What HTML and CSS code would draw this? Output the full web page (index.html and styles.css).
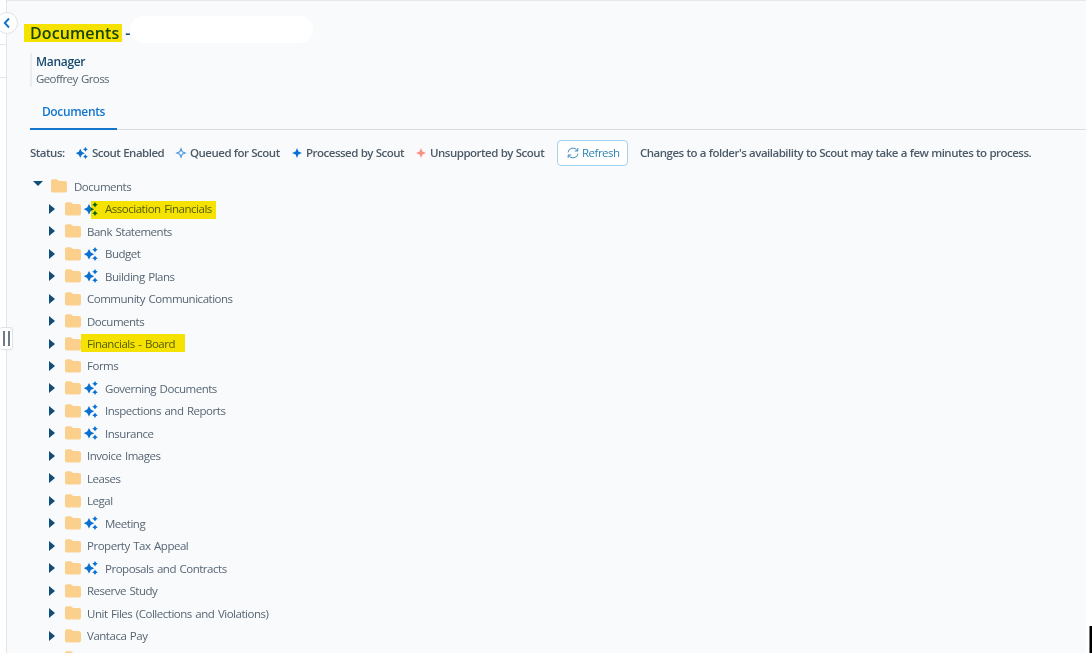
FILE: index.html
```
<!DOCTYPE html>
<html lang="en">
  <head>
    <meta charset="UTF-8" />
    <title>Documents</title>
    <link rel="stylesheet" href="styles.css">
  </head>
  <body>
    <svg class="defs" width="0" height="0">
      <symbol id="folder" viewBox="0 0 16 14">
        <path d="M0 2.2Q0 .3 1.8 .3H5.4Q6.3 .3 7 1L8 2H14Q16 2 16 4V11.6Q16 13.6 14 13.6H2Q0 13.6 0 11.6Z" fill="#fbd08d" />
      </symbol>
      <symbol id="star" viewBox="0 0 10 10">
        <path d="M5 0L6.4 3.6L10 5L6.4 6.4L5 10L3.6 6.4L0 5L3.6 3.6Z" />
      </symbol>
      <symbol id="sparkles" viewBox="0 0 14 14">
        <path d="M5 2L6.8 5.4L10.2 7.2L6.8 9L5 12.4L3.2 9L-.2 7.2L3.2 5.4ZM11 0L12 1.8L13.8 2.8L12 3.8L11 5.6L10 3.8L8.2 2.8L10 1.8ZM11 8.4L12 10.2L13.8 11.2L12 12.2L11 14L10 12.2L8.2 11.2L10 10.2Z" />
      </symbol>
    </svg>
    <div id="app">
      <div id="rail">
        <div class="rail-top"></div>
        <div class="rail-item"></div>
        <button class="rail-toggle">
          <svg width="8" height="12" viewBox="0 0 8 12"><path d="M6 1.5L1.8 6L6 10.5" fill="none" stroke="#1273cc" stroke-width="1.9" /></svg>
        </button>
        <div class="rail-grip"></div>
      </div>
      <main id="content">
        <h1 class="page-title"><span class="marker">Documents</span><span class="dash">-</span><span class="blank"></span></h1>
        <div class="manager">
          <div class="manager-label">Manager</div>
          <div class="manager-name">Geoffrey Gross</div>
        </div>
        <nav class="tabs"><a class="tab">Documents</a></nav>
        <div class="status">
          <span class="status-label">Status:</span>
          <span class="status-item enabled"><svg class="blue" width="12" height="12"><use href="#sparkles" /></svg>Scout Enabled</span>
          <span class="status-item queued"><svg width="10" height="10" viewBox="0 0 10 10"><path d="M5 .8L6.2 3.8L9.2 5L6.2 6.2L5 9.2L3.8 6.2L.8 5L3.8 3.8Z" fill="#fff" stroke="#4c97dc" stroke-width="1.1" /></svg>Queued for Scout</span>
          <span class="status-item processed"><svg class="blue" width="10" height="10"><use href="#star" /></svg>Processed by Scout</span>
          <span class="status-item unsupported"><svg class="red" width="10" height="10"><use href="#star" /></svg>Unsupported by Scout</span>
          <button class="refresh">
            <svg width="12" height="12" viewBox="0 0 12 12" fill="none" stroke="#2b82b5" stroke-width=".9"><path d="M1 5.4A5 5 0 0 1 10.3 3.6M10.8 1V4H7.8M11 6.6A5 5 0 0 1 1.7 8.4M1.2 11V8H4.2" /></svg>
            <span>Refresh</span>
          </button>
          <span class="note">Changes to a folder's availability to Scout may take a few minutes to process.</span>
        </div>
        <div class="tree-root"><i class="arrow-down"></i><svg class="folder" width="16" height="14"><use href="#folder" /></svg><span>Documents</span></div>
        <ul class="tree">
          <li><i class="arrow"></i><svg class="folder" width="16" height="14"><use href="#folder" /></svg><svg class="scout" width="14" height="14"><use href="#sparkles" /></svg><span class="marker marker-assoc">Association Financials</span></li>
          <li><i class="arrow"></i><svg class="folder" width="16" height="14"><use href="#folder" /></svg><span>Bank Statements</span></li>
          <li><i class="arrow"></i><svg class="folder" width="16" height="14"><use href="#folder" /></svg><svg class="scout" width="14" height="14"><use href="#sparkles" /></svg><span>Budget</span></li>
          <li><i class="arrow"></i><svg class="folder" width="16" height="14"><use href="#folder" /></svg><svg class="scout" width="14" height="14"><use href="#sparkles" /></svg><span>Building Plans</span></li>
          <li><i class="arrow"></i><svg class="folder" width="16" height="14"><use href="#folder" /></svg><span>Community Communications</span></li>
          <li><i class="arrow"></i><svg class="folder" width="16" height="14"><use href="#folder" /></svg><span>Documents</span></li>
          <li><i class="arrow"></i><svg class="folder" width="16" height="14"><use href="#folder" /></svg><span class="marker marker-board">Financials - Board</span></li>
          <li><i class="arrow"></i><svg class="folder" width="16" height="14"><use href="#folder" /></svg><span>Forms</span></li>
          <li><i class="arrow"></i><svg class="folder" width="16" height="14"><use href="#folder" /></svg><svg class="scout" width="14" height="14"><use href="#sparkles" /></svg><span>Governing Documents</span></li>
          <li><i class="arrow"></i><svg class="folder" width="16" height="14"><use href="#folder" /></svg><svg class="scout" width="14" height="14"><use href="#sparkles" /></svg><span>Inspections and Reports</span></li>
          <li><i class="arrow"></i><svg class="folder" width="16" height="14"><use href="#folder" /></svg><svg class="scout" width="14" height="14"><use href="#sparkles" /></svg><span>Insurance</span></li>
          <li><i class="arrow"></i><svg class="folder" width="16" height="14"><use href="#folder" /></svg><span>Invoice Images</span></li>
          <li><i class="arrow"></i><svg class="folder" width="16" height="14"><use href="#folder" /></svg><span>Leases</span></li>
          <li><i class="arrow"></i><svg class="folder" width="16" height="14"><use href="#folder" /></svg><span>Legal</span></li>
          <li><i class="arrow"></i><svg class="folder" width="16" height="14"><use href="#folder" /></svg><svg class="scout" width="14" height="14"><use href="#sparkles" /></svg><span>Meeting</span></li>
          <li><i class="arrow"></i><svg class="folder" width="16" height="14"><use href="#folder" /></svg><span>Property Tax Appeal</span></li>
          <li><i class="arrow"></i><svg class="folder" width="16" height="14"><use href="#folder" /></svg><svg class="scout" width="14" height="14"><use href="#sparkles" /></svg><span>Proposals and Contracts</span></li>
          <li><i class="arrow"></i><svg class="folder" width="16" height="14"><use href="#folder" /></svg><span>Reserve Study</span></li>
          <li><i class="arrow"></i><svg class="folder" width="16" height="14"><use href="#folder" /></svg><span>Unit Files (Collections and Violations)</span></li>
          <li><i class="arrow"></i><svg class="folder" width="16" height="14"><use href="#folder" /></svg><span>Vantaca Pay</span></li>
          <li><i class="arrow"></i><svg class="folder" width="16" height="14"><use href="#folder" /></svg></li>
        </ul>
      </main>
      <div id="edge"></div>
    </div>
  </body>
</html>
```
FILE: styles.css
```
*,
*::before,
*::after {
  box-sizing: border-box;
}
body {
  margin: 0;
  background-color: #fff;
  font-family: "Open Sans", "Noto Sans", sans-serif;
  font-size: 11.5px;
  letter-spacing: -0.48px;
  word-spacing: 1px;
  color: #566673;
}
.defs {
  position: absolute;
}
svg {
  display: block;
  flex-shrink: 0;
  overflow: visible;
}
.blue,
.scout {
  fill: #0a70d0;
}
.red {
  fill: #fa8f82;
}

#app {
  display: flex;
  height: 653px;
  overflow: hidden;
}

/* left rail */
#rail {
  position: relative;
  width: 7px;
  border-right: 1px solid #e3e6e8;
}
.rail-top {
  height: 45px;
  border-bottom: 1px solid #e3e6e8;
}
.rail-item {
  height: 33px;
  border-bottom: 1px solid #e3e6e8;
}
.rail-toggle {
  position: absolute;
  top: 12px;
  left: -4px;
  z-index: 1;
  width: 22px;
  height: 22px;
  padding: 0 0 0 6px;
  border: 1px solid #dfe3e6;
  border-radius: 50%;
  background: #fff;
}
.rail-grip {
  position: absolute;
  top: 327px;
  left: 0;
  z-index: 1;
  width: 13px;
  height: 23px;
  border: 1px solid #dfe2e5;
  border-left: 0;
  border-radius: 3px;
  background: #fff;
}
.rail-grip::before {
  content: "";
  display: block;
  width: 7px;
  height: 15px;
  margin: 3px 0 0 3px;
  border: solid #6d7b88;
  border-width: 0 2px;
}

#content {
  width: 1079px;
  border-top: 1px solid #e6e8ea;
  padding-left: 23px;
  background-color: #f9fafc;
}

.page-title {
  display: flex;
  align-items: center;
  height: 28px;
  margin: 15px 0 0;
  font-size: 16px;
  font-weight: 600;
  line-height: 18px;
  letter-spacing: 0.1px;
  color: #17496e;
}
.page-title .marker {
  margin: 5px 0 0;
}
.dash {
  width: 10px;
  margin: 5px 0 0 6px;
}
.blank {
  align-self: flex-start;
  width: 183px;
  height: 27px;
  margin-left: -5px;
  border-radius: 14px;
  background: #fff;
}

/* highlighter pen */
.marker {
  position: relative;
}
.marker::after {
  content: "";
  position: absolute;
  inset: 0 -3px 0 -6px;
  background: #fbe700;
  mix-blend-mode: multiply;
}

.manager {
  height: 34px;
  margin-top: 9px;
  padding-left: 4px;
  border-left: 2px solid #ebedef;
  line-height: 17px;
}
.manager-label {
  font-size: 12px;
  font-weight: 600;
  letter-spacing: -0.3px;
  color: #17496e;
}
.manager-name {
  letter-spacing: -0.6px;
}

.tabs {
  display: flex;
  height: 43px;
  border-bottom: 1px solid #dadde1;
}
.tab {
  width: 87px;
  height: 43px;
  padding-top: 16px;
  border-bottom: 2px solid #1276cd;
  font-size: 12px;
  font-weight: 600;
  line-height: 18px;
  letter-spacing: -0.35px;
  text-align: center;
  color: #1276cd;
}

.status {
  display: flex;
  align-items: center;
  height: 26px;
  margin-top: 10px;
  font-weight: 600;
  white-space: nowrap;
  line-height: 16px;
  letter-spacing: -0.5px;
  word-spacing: 0.3px;
  color: #4c5b68;
}
.status-label {
  width: 46px;
}
.status-item {
  display: flex;
  align-items: center;
  gap: 4px;
}
.enabled {
  width: 100px;
}
.queued {
  width: 116px;
}
.processed {
  width: 124px;
}
.unsupported {
  width: 141px;
}
.refresh {
  display: flex;
  align-items: center;
  gap: 3px;
  width: 71px;
  height: 26px;
  padding: 0 0 1px 9px;
  border: 1px solid #a3d1ef;
  border-radius: 4px;
  background: #fff;
  font: inherit;
  font-weight: 400;
  letter-spacing: -0.5px;
  color: #2b82b5;
}
.note {
  margin-left: 12px;
  letter-spacing: -0.5px;
}

.tree-root,
.tree li {
  display: flex;
  align-items: center;
  height: 22.47px;
  white-space: nowrap;
}
.tree-root {
  margin-top: 9px;
  padding-left: 3px;
}
.tree-root .folder {
  margin: 0 7px 0 8px;
}
.arrow-down {
  border: 5px solid transparent;
  border-top: 5px solid #124c78;
  border-bottom: 0;
  margin-top: -5px;
}
.tree {
  margin: 0;
  padding: 0 0 0 19px;
  list-style: none;
}
.arrow {
  border: 5px solid transparent;
  border-left: 6px solid #124c78;
  border-right: 0;
}
.tree .folder {
  margin: 0 6px 0 10px;
}
.tree .scout {
  margin: 0 7px 0 -3px;
}
.marker-assoc::after {
  inset: 0 -4px -3px -14px;
}
.marker-board::after {
  inset: -2px -10px -1px -6px;
}

/* right gutter with the scroll thumb */
#edge {
  align-self: flex-end;
  width: 3px;
  height: 27px;
  margin-left: 3px;
  border-left: 1px solid #777;
  background: #000;
}
```
